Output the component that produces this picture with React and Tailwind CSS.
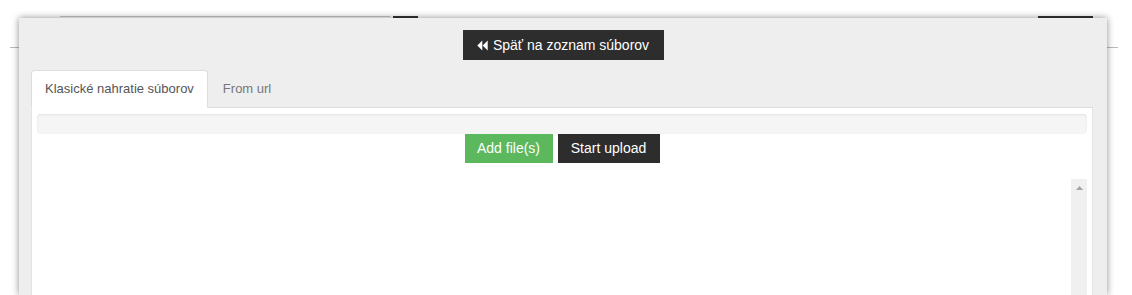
export default function App() {
  return (
    <div className="relative w-[1132px] h-[295px] overflow-hidden bg-white font-['Liberation_Sans',Arial,sans-serif]">
      {/* page behind the dialog */}
      <div className="absolute left-0 top-[16px] flex w-full h-[2px]">
        <div className="ml-[60px] w-[330px] h-[1px] bg-[#c8c8c8]" />
        <div className="ml-[3px] w-[25px] h-[2px] bg-[#333]" />
        <div className="ml-[620px] w-[55px] h-[2px] bg-[#333]" />
      </div>
      <div className="absolute left-[10px] top-[47px] w-[10px] h-[1px] bg-[#bbb]" />
      <div className="absolute left-[1106px] top-[47px] w-[12px] h-[1px] bg-[#bbb]" />

      <div className="relative mt-[18px] ml-[19px] w-[1088px] h-[277px] bg-[#eeeeee] shadow-[0_0_7px_rgba(0,0,0,0.45)] px-[12px] pt-[12px] flex flex-col">
        <div className="flex justify-center">
          <button className="flex items-center gap-[5px] h-[30px] w-[201px] justify-center bg-[#2d2d2d] text-white text-[14px]">
            <svg width="11" height="11" viewBox="0 0 11 11" fill="#fff">
              <path d="M5.3 0.5 L0.3 5.5 L5.3 10.5 Z" />
              <path d="M10.7 0.5 L5.7 5.5 L10.7 10.5 Z" />
            </svg>
            <span>Späť na zoznam súborov</span>
          </button>
        </div>

        <div className="mt-[11px] flex items-end h-[37px] border-b border-[#dddddd] mr-[2px]">
          <div className="h-[38px] -mb-[1px] px-[13px] flex items-center bg-white border border-[#dddddd] border-b-white rounded-t-[4px] text-[13px] text-[#555]">
            Klasické nahratie súborov
          </div>
          <div className="h-[37px] px-[15px] flex items-center text-[13px] text-[#777]">
            From url
          </div>
        </div>

        <div className="flex-1 bg-white border-x border-[#e4e4e4] mr-[2px] px-[5px] pt-[6px] flex flex-col">
          <div className="h-[20px] rounded-[4px] bg-[#f5f5f5] shadow-[inset_0_1px_2px_rgba(0,0,0,0.08)]" />
          <div className="flex justify-center gap-[5px]">
            <button className="h-[29px] w-[88px] bg-[#5cb85c] text-white text-[14px]">Add file(s)</button>
            <button className="h-[29px] w-[102px] bg-[#2d2d2d] text-white text-[14px]">Start upload</button>
          </div>
          <div className="flex-1 mt-[16px] flex justify-end">
            <div className="w-[16px] h-full bg-[#f0f0f0] flex justify-center pt-[7px]">
              <svg width="7" height="4" viewBox="0 0 7 4">
                <path d="M3.5 0 L7 4 L0 4 Z" fill="#a3a3a3" />
              </svg>
            </div>
          </div>
        </div>
      </div>
    </div>
  );
}
